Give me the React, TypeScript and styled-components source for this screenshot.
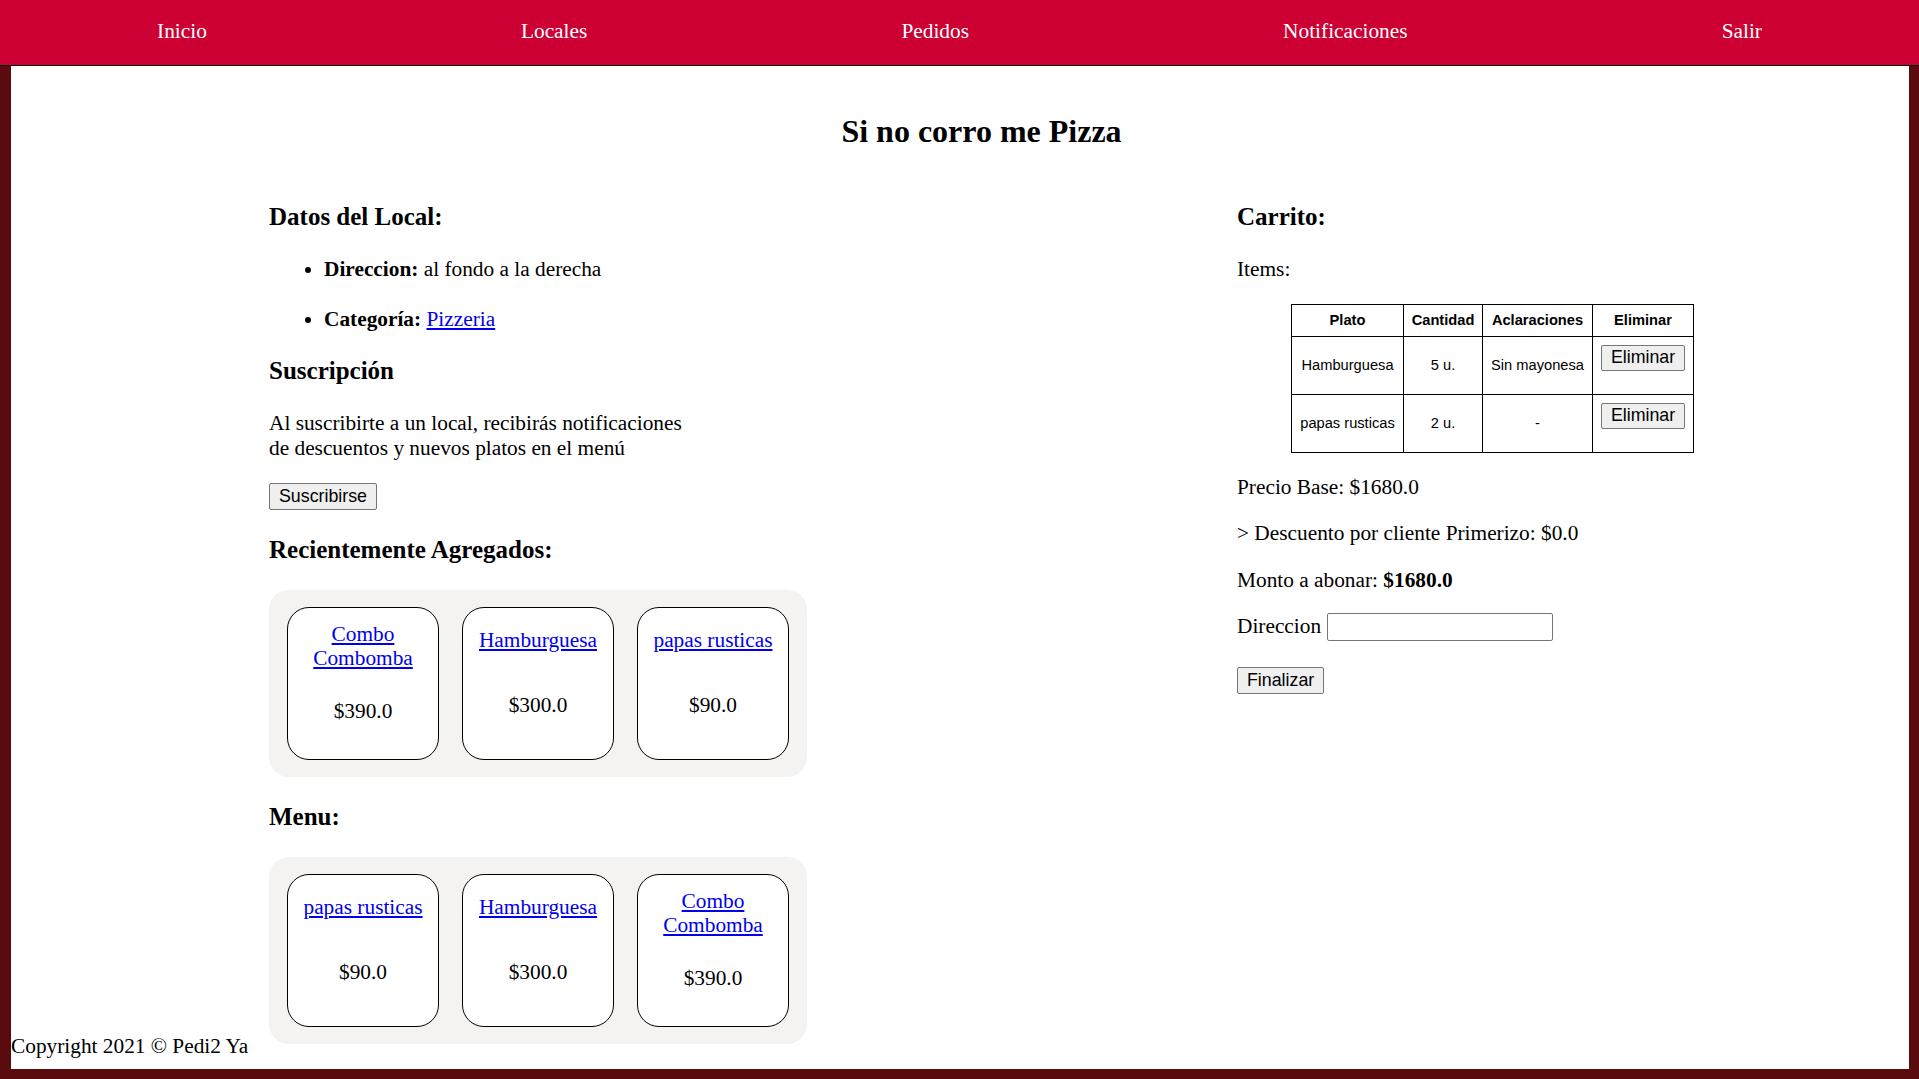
import React from "react";
import styled, { createGlobalStyle } from "styled-components";

const GlobalStyle = createGlobalStyle`
  html, body {
    margin: 0;
    padding: 0;
    background: #590b0d;
    font-family: "Liberation Serif", "Times New Roman", serif;
    font-size: 21.33px;
    color: #000;
  }
`;

const NavBar = styled.nav`
  box-sizing: border-box;
  height: 66px;
  padding-bottom: 3px;
  background: #cc0033;
  border-bottom: 1px solid #000;
  display: flex;
  justify-content: space-around;
  align-items: center;
`;

const NavLink = styled.a`
  color: #fff;
  text-decoration: none;
  font-size: 21.33px;
  line-height: 24px;
`;

const Main = styled.main`
  position: relative;
  box-sizing: border-box;
  height: 1003px;
  margin: 0 10px 0 11px;
  padding-top: 47px;
  background: #fff;
`;

const Content = styled.div`
  margin-left: 258px;
  width: 1425px;
`;

const Title = styled.h2`
  margin: 0;
  font-size: 32px;
  line-height: 37px;
  text-align: center;
  font-weight: bold;
`;

const Columns = styled.div`
  display: grid;
  grid-template-columns: 968px 1fr;
  margin-top: 52px;
`;

const LeftColumn = styled.section`
  display: flex;
  flex-direction: column;
  align-items: flex-start;
  gap: 25px;
`;

const RightColumn = styled.section`
  display: flex;
  flex-direction: column;
  align-items: flex-start;
  gap: 22px;
`;

const SectionTitle = styled.h3`
  margin: 0;
  font-size: 25px;
  line-height: 30px;
  font-weight: bold;
`;

const InfoList = styled.ul`
  margin: 0;
  padding-left: 55px;
  display: flex;
  flex-direction: column;
  gap: 25px;
  list-style: disc;
`;

const InfoItem = styled.li`
  line-height: 24.5px;
`;

const Text = styled.p<{ $offset?: number }>`
  margin: ${(p) => p.$offset || 0}px 0 0;
  line-height: 24.5px;
`;

const Blurb = styled.p`
  margin: 0;
  max-width: 430px;
  line-height: 24.5px;
`;

const Link = styled.a`
  color: #0000ee;
  text-decoration: underline;
`;

const Button = styled.button<{ $h?: number; $offset?: number }>`
  box-sizing: border-box;
  height: ${(p) => p.$h || 27}px;
  margin-top: ${(p) => p.$offset || 0}px;
  padding: 0 9px;
  font-family: "Liberation Sans", Arial, sans-serif;
  font-size: 17.8px;
  color: #000;
  background: #efefef;
  border: 1px solid #767676;
  border-radius: 2px;
`;

const Shelf = styled.div`
  box-sizing: border-box;
  width: 538px;
  padding: 17px 18px;
  display: flex;
  gap: 23px;
  background: #f4f3f2;
  border-radius: 20px;
`;

const DishCard = styled.div`
  box-sizing: border-box;
  width: 152px;
  height: 153px;
  padding: 0 6px 22px;
  border: 1px solid #000;
  border-radius: 22px;
  background: #fff;
  display: flex;
  flex-direction: column;
  justify-content: space-around;
  align-items: center;
  text-align: center;
  font-size: 21.33px;
  line-height: 24.5px;
`;

const DishPrice = styled.div`
  margin-top: 1px;
`;

const CartTable = styled.table`
  margin-left: 54px;
  width: 402px;
  table-layout: fixed;
  border-collapse: collapse;
  font-family: "Liberation Sans", Arial, sans-serif;
  font-size: 14.67px;
  line-height: 17px;
`;

const HeadCell = styled.th<{ $w: number }>`
  box-sizing: border-box;
  width: ${(p) => p.$w}px;
  padding: 7px 2px;
  border: 1px solid #000;
  font-weight: bold;
  text-align: center;
`;

const Cell = styled.td`
  padding: 8px 2px;
  border: 1px solid #000;
  text-align: center;
  vertical-align: middle;
`;

const ActionCell = styled.td`
  padding: 8px 6px;
  border: 1px solid #000;
  vertical-align: top;
`;

const RemoveButton = styled(Button)`
  display: block;
  width: 84px;
  margin: 0 auto 15px;
  padding: 0;
`;

const AddressRow = styled.label`
  display: flex;
  align-items: center;
  gap: 6px;
  height: 28px;
  margin-top: -2px;
  line-height: 24.5px;
`;

const AddressInput = styled.input`
  box-sizing: border-box;
  width: 226px;
  height: 28px;
  border: 1px solid #767676;
  border-radius: 2px;
  margin-top: 1px;
`;

const Footer = styled.footer`
  position: absolute;
  left: 0;
  bottom: 11px;
  line-height: 24.5px;
`;

type Dish = { name: string; price: string };

const recent: Dish[] = [
  { name: "Combo Combomba", price: "$390.0" },
  { name: "Hamburguesa", price: "$300.0" },
  { name: "papas rusticas", price: "$90.0" },
];

const menu: Dish[] = [
  { name: "papas rusticas", price: "$90.0" },
  { name: "Hamburguesa", price: "$300.0" },
  { name: "Combo Combomba", price: "$390.0" },
];

const cart = [
  { plato: "Hamburguesa", cantidad: "5 u.", nota: "Sin mayonesa" },
  { plato: "papas rusticas", cantidad: "2 u.", nota: "-" },
];

const DishShelf: React.FC<{ dishes: Dish[] }> = ({ dishes }) => (
  <Shelf>
    {dishes.map((d, i) => (
      <DishCard key={i}>
        <Link href="#">{d.name}</Link>
        <DishPrice>{d.price}</DishPrice>
      </DishCard>
    ))}
  </Shelf>
);

const App: React.FC = () => {
  return (
    <>
      <GlobalStyle />
      <NavBar>
        <NavLink href="#">Inicio</NavLink>
        <NavLink href="#">Locales</NavLink>
        <NavLink href="#">Pedidos</NavLink>
        <NavLink href="#">Notificaciones</NavLink>
        <NavLink href="#">Salir</NavLink>
      </NavBar>
      <Main>
        <Content>
          <Title>Si no corro me Pizza</Title>
          <Columns>
            <LeftColumn>
              <SectionTitle>Datos del Local:</SectionTitle>
              <InfoList>
                <InfoItem>
                  <b>Direccion:</b> al fondo a la derecha
                </InfoItem>
                <InfoItem>
                  <b>Categoría:</b> <Link href="#">Pizzeria</Link>
                </InfoItem>
              </InfoList>
              <SectionTitle>Suscripción</SectionTitle>
              <Blurb>
                Al suscribirte a un local, recibirás notificaciones de descuentos y nuevos platos en el menú
              </Blurb>
              <Button $offset={-2}>Suscribirse</Button>
              <SectionTitle>Recientemente Agregados:</SectionTitle>
              <DishShelf dishes={recent} />
              <SectionTitle>Menu:</SectionTitle>
              <DishShelf dishes={menu} />
            </LeftColumn>
            <RightColumn>
              <SectionTitle>Carrito:</SectionTitle>
              <Text $offset={3}>Items:</Text>
              <CartTable>
                <thead>
                  <tr>
                    <HeadCell $w={112}>Plato</HeadCell>
                    <HeadCell $w={79}>Cantidad</HeadCell>
                    <HeadCell $w={110}>Aclaraciones</HeadCell>
                    <HeadCell $w={101}>Eliminar</HeadCell>
                  </tr>
                </thead>
                <tbody>
                  {cart.map((item, i) => (
                    <tr key={i}>
                      <Cell>{item.plato}</Cell>
                      <Cell>{item.cantidad}</Cell>
                      <Cell>{item.nota}</Cell>
                      <ActionCell>
                        <RemoveButton $h={26}>Eliminar</RemoveButton>
                      </ActionCell>
                    </tr>
                  ))}
                </tbody>
              </CartTable>
              <Text>Precio Base: $1680.0</Text>
              <Text>&gt; Descuento por cliente Primerizo: $0.0</Text>
              <Text>
                Monto a abonar: <b>$1680.0</b>
              </Text>
              <AddressRow>
                Direccion
                <AddressInput type="text" />
              </AddressRow>
              <Button $offset={5}>Finalizar</Button>
            </RightColumn>
          </Columns>
        </Content>
        <Footer>Copyright 2021 © Pedi2 Ya</Footer>
      </Main>
    </>
  );
};

export default App;
